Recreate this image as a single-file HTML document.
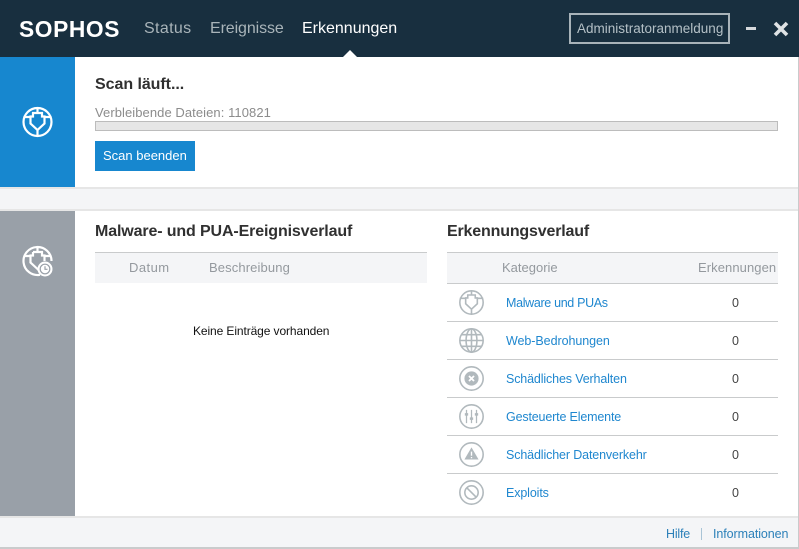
<!DOCTYPE html>
<html lang="de"><head><meta charset="utf-8"><title>Sophos</title>
<style>
html,body{margin:0;padding:0;width:799px;height:549px;overflow:hidden;background:#fff}
body{position:relative;font-family:"Liberation Sans",sans-serif}
.a{position:absolute}
.t{position:absolute;white-space:nowrap;line-height:16px}
.nav{font-size:16px;top:21px;color:#a9b4b9}
.h{font-size:16px;font-weight:bold;color:#303030}
.th{font-size:13px;color:#94999e}
.l{font-size:12.5px;color:#1f87cf}
.n{font-size:12.5px;color:#444;left:732px}
.hr{position:absolute;left:447px;width:331px;height:1px;background:#c9cbcc}
svg{position:absolute;overflow:visible}
.i{fill:none;stroke:#b1b9bd;stroke-width:1.9}
</style></head><body>
<div class="a" style="left:0;top:0;width:799px;height:57px;background:#182f3f"></div>
<div class="t" style="left:19px;top:16px;font-size:23px;line-height:26px;font-weight:bold;color:#fff;letter-spacing:.6px;transform-origin:0 50%;transform:scaleX(.99)">SOPHOS</div>
<div class="t nav" style="left:144px;letter-spacing:.35px">Status</div>
<div class="t nav" style="left:210px;letter-spacing:-.1px">Ereignisse</div>
<div class="t nav" style="left:302px;color:#fff">Erkennungen</div>
<svg style="left:340px;top:50px" width="20" height="7"><path d="M3 7L10 0L17 7Z" fill="#fff"/></svg>
<div class="a" style="left:569px;top:13px;width:157px;height:27px;border:2px solid #a8b3b9"></div>
<div class="t" style="left:577px;top:21px;font-size:13.5px;color:#b4c0c6">Administratoranmeldung</div>
<div class="a" style="left:746px;top:27px;width:10px;height:3px;background:#d5d9dc"></div>
<svg style="left:773px;top:21px" width="16" height="16"><path d="M2 2L14 14M14 2L2 14" stroke="#dfe3e5" stroke-width="3.6"/></svg>

<div class="a" style="left:0;top:57px;width:75px;height:130px;background:#1787cf"></div>
<svg style="left:22px;top:107px" width="31" height="30" viewBox="0 0 31 30" fill="none" stroke="#fff" stroke-width="2.2"><circle cx="15.500" cy="15" r="14"/><path d="M1.500 10H8.500M22.500 10H29.500M15.500 1V6M15.500 23V29M11 6H20V9.500H22.500V16.500L15.500 23L8.500 16.500V9.500H11Z"/></svg>

<div class="t h" style="left:95px;top:77px;letter-spacing:-.05px">Scan läuft...</div>
<div class="t" style="left:95px;top:105px;font-size:13px;color:#8c8c8c;letter-spacing:.07px">Verbleibende Dateien: 110821</div>
<div class="a" style="left:95px;top:121px;width:681px;height:8px;background:#e6e6e6;border:1px solid #bcbcbc"></div>
<div class="a" style="left:95px;top:141px;width:100px;height:30px;background:#1787cf"></div>
<div class="t" style="left:103px;top:148px;font-size:13px;color:#fff">Scan beenden</div>

<div class="a" style="left:0;top:187px;width:798px;height:24px;box-sizing:border-box;background:#f4f5f7;border-top:2px solid #e6e6e6;border-bottom:2px solid #e6e6e6"></div>
<div class="a" style="left:0;top:211px;width:75px;height:305px;background:#99a0a8"></div>
<svg style="left:22px;top:246px" width="31" height="30" viewBox="0 0 31 30" fill="none" stroke="#fff" stroke-width="2.2"><path d="M18 28.800A14 14 0 1 1 29.500 15M1.500 10H8.500M22.500 10H29.500M15.500 1V6M15.500 23L18 25.500M11 6H20V9.500H22.500V15M11 6V9.500H8.500V16.500L15.500 23"/><circle cx="23" cy="23" r="7.500" fill="#fff" stroke="none"/><circle cx="23" cy="23" r="4.800" stroke="#99a0a8" stroke-width="1.200"/><path d="M23 20.300V23.300H25.500" stroke="#99a0a8" stroke-width="1.200"/></svg>

<div class="t h" style="left:95px;top:224px;letter-spacing:-.13px">Malware- und PUA-Ereignisverlauf</div>
<div class="a" style="left:95px;top:252px;width:332px;height:31px;background:#f4f5f7;border-top:1px solid #c9cbcc;box-sizing:border-box"></div>
<div class="t th" style="left:129px;top:260px;letter-spacing:.45px">Datum</div>
<div class="t th" style="left:209px;top:260px;letter-spacing:.12px">Beschreibung</div>
<div class="t" style="left:193px;top:323px;font-size:12px;color:#111;letter-spacing:-.1px">Keine Einträge vorhanden</div>

<div class="t h" style="left:447px;top:224px;letter-spacing:-.17px">Erkennungsverlauf</div>
<div class="a" style="left:447px;top:252px;width:331px;height:32px;background:#f4f5f7;border-top:1px solid #c9cbcc;border-bottom:1px solid #c9cbcc;box-sizing:border-box"></div>
<div class="t th" style="left:502px;top:260px">Kategorie</div>
<div class="t th" style="left:698px;top:260px;letter-spacing:.08px">Erkennungen</div>

<div class="hr" style="top:321px"></div>
<div class="hr" style="top:359px"></div>
<div class="hr" style="top:397px"></div>
<div class="hr" style="top:435px"></div>
<div class="hr" style="top:473px"></div>

<svg class="i" style="left:459px;top:290px" width="25" height="25" viewBox="0.500 0 30 30"><circle cx="15.500" cy="15" r="14"/><path d="M1.500 10H8.500M22.500 10H29.500M15.500 1V6M15.500 23V29M11 6H20V9.500H22.500V16.500L15.500 23L8.500 16.500V9.500H11Z"/></svg>
<svg class="i" style="left:459px;top:328px" width="25" height="25" viewBox="0 0 30 30"><circle cx="15" cy="15" r="14"/><ellipse cx="15" cy="15" rx="6.500" ry="14"/><path d="M15 1V29M1 15H29M3 8H27M3 22H27"/></svg>
<svg class="i" style="left:459px;top:366px" width="25" height="25" viewBox="0 0 30 30"><circle cx="15" cy="15" r="14"/><circle cx="15" cy="15" r="8.500" fill="#b1b9bd" stroke="none"/><path d="M12 12L18 18M18 12L12 18" stroke="#fff" stroke-width="2.200"/></svg>
<svg class="i" style="left:459px;top:404px" width="25" height="25" viewBox="0 0 30 30"><circle cx="15" cy="15" r="14"/><path d="M9 7V23M15 7V23M21 7V23" stroke-width="1.500"/><path d="M7 12.500H11M13 17.500H17M19 12.500H23" stroke-width="3"/></svg>
<svg class="i" style="left:459px;top:442px" width="25" height="25" viewBox="0 0 30 30"><circle cx="15" cy="15" r="14"/><path d="M15 6.500L23.500 21H6.500Z" fill="#b1b9bd" stroke="none"/><path d="M15 11.500V16.500M15 18V19.500" stroke="#fff" stroke-width="1.600"/></svg>
<svg class="i" style="left:459px;top:480px" width="25" height="25" viewBox="0 0 30 30"><circle cx="15" cy="15" r="14"/><circle cx="15" cy="15" r="8"/><path d="M9.500 9.500L20.500 20.500"/></svg>

<div class="t l" style="left:506px;top:295px;letter-spacing:-.33px">Malware und PUAs</div><div class="t n" style="top:295px">0</div>
<div class="t l" style="left:506px;top:333px;letter-spacing:-.06px">Web-Bedrohungen</div><div class="t n" style="top:333px">0</div>
<div class="t l" style="left:506px;top:371px;letter-spacing:-.14px">Schädliches Verhalten</div><div class="t n" style="top:371px">0</div>
<div class="t l" style="left:506px;top:409px;letter-spacing:-.16px">Gesteuerte Elemente</div><div class="t n" style="top:409px">0</div>
<div class="t l" style="left:506px;top:447px;letter-spacing:-.13px">Schädlicher Datenverkehr</div><div class="t n" style="top:447px">0</div>
<div class="t l" style="left:506px;top:485px;letter-spacing:-.12px">Exploits</div><div class="t n" style="top:485px">0</div>

<div class="a" style="left:0;top:516px;width:798px;height:33px;box-sizing:border-box;background:#f4f5f7;border-top:2px solid #e6e6e6;border-bottom:2px solid #c9cbcc"></div>
<div class="t" style="left:666px;top:526px;font-size:12.500px;color:#2c80b9;letter-spacing:-.2px">Hilfe</div>
<div class="a" style="left:701px;top:528px;width:1px;height:12px;background:#a9c4d6"></div>
<div class="t" style="left:713px;top:526px;font-size:12.500px;color:#2c80b9;letter-spacing:-.08px">Informationen</div>
<div class="a" style="left:798px;top:57px;width:1px;height:492px;background:#c9cbcc"></div>
</body></html>
